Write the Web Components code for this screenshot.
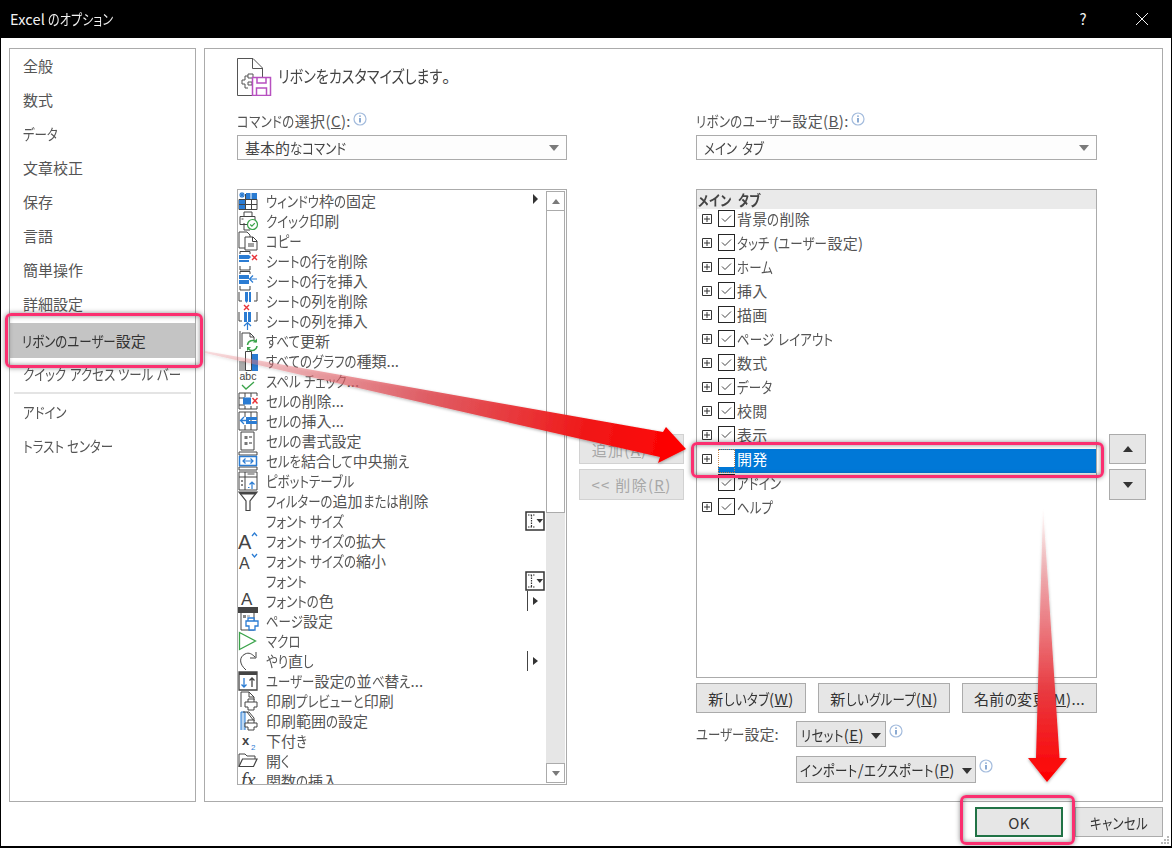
<!DOCTYPE html>
<html lang="ja">
<head>
<meta charset="utf-8">
<title>Excel のオプション</title>
<style>
    html, body { margin: 0; padding: 0; background: #fff; }
    body {
        font-family: "Noto Sans CJK JP", "Noto Sans", sans-serif;
        font-size: 15px;
        font-feature-settings: "palt";
        color: #444;
        overflow: hidden;
    }
</style>
</head>
<body>
<xl-window>
    <nav-panel slot="nav">
        <nav-item>全般</nav-item>
        <nav-item>数式</nav-item>
        <nav-item>データ</nav-item>
        <nav-item>文章校正</nav-item>
        <nav-item>保存</nav-item>
        <nav-item>言語</nav-item>
        <nav-item>簡単操作</nav-item>
        <nav-item>詳細設定</nav-item>
        <nav-item selected>リボンのユーザー設定</nav-item>
        <nav-item>クイック アクセス ツール バー</nav-item>
        <nav-sep></nav-sep>
        <nav-item>アドイン</nav-item>
        <nav-item>トラスト センター</nav-item>
    </nav-panel>

    <main-panel slot="main">
        <field-label slot="left-label" info>コマンドの選択(<u>C</u>):</field-label>
        <drop-select slot="left-select">基本的なコマンド</drop-select>
        <command-list slot="left-list">
            <cmd-row icon="freeze" tail="more">ウィンドウ枠の固定</cmd-row>
            <cmd-row icon="qprint">クイック印刷</cmd-row>
            <cmd-row icon="copy">コピー</cmd-row>
            <cmd-row icon="delrow">シートの行を削除</cmd-row>
            <cmd-row icon="insrow">シートの行を挿入</cmd-row>
            <cmd-row icon="delcol">シートの列を削除</cmd-row>
            <cmd-row icon="inscol">シートの列を挿入</cmd-row>
            <cmd-row icon="refresh">すべて更新</cmd-row>
            <cmd-row icon="chart">すべてのグラフの種類...</cmd-row>
            <cmd-row icon="spell">スペル チェック...</cmd-row>
            <cmd-row icon="delcell">セルの削除...</cmd-row>
            <cmd-row icon="inscell">セルの挿入...</cmd-row>
            <cmd-row icon="format">セルの書式設定</cmd-row>
            <cmd-row icon="merge">セルを結合して中央揃え</cmd-row>
            <cmd-row icon="pivot">ピボットテーブル</cmd-row>
            <cmd-row icon="filter">フィルターの追加または削除</cmd-row>
            <cmd-row tail="combo">フォント サイズ</cmd-row>
            <cmd-row icon="grow">フォント サイズの拡大</cmd-row>
            <cmd-row icon="shrink">フォント サイズの縮小</cmd-row>
            <cmd-row tail="combo">フォント</cmd-row>
            <cmd-row icon="fontcolor" tail="split">フォントの色</cmd-row>
            <cmd-row icon="pagesetup">ページ設定</cmd-row>
            <cmd-row icon="macro">マクロ</cmd-row>
            <cmd-row icon="redo" tail="split">やり直し</cmd-row>
            <cmd-row icon="sort">ユーザー設定の並べ替え...</cmd-row>
            <cmd-row icon="preview">印刷プレビューと印刷</cmd-row>
            <cmd-row icon="printarea">印刷範囲の設定</cmd-row>
            <cmd-row icon="subscript">下付き</cmd-row>
            <cmd-row icon="open">開く</cmd-row>
            <cmd-row icon="fx">関数の挿入</cmd-row>
        </command-list>

        <flat-button slot="middle" disabled style="height:30px">追加(<u>A</u>) &gt;&gt;</flat-button>
        <flat-button slot="middle" disabled style="height:31px">&lt;&lt; 削除(<u>R</u>)</flat-button>

        <field-label slot="right-label" info>リボンのユーザー設定(<u>B</u>):</field-label>
        <drop-select slot="right-select">メイン タブ</drop-select>
        <tab-tree slot="right-list" title-text="メイン タブ">
            <tree-row>背景の削除</tree-row>
            <tree-row>タッチ (ユーザー設定)</tree-row>
            <tree-row>ホーム</tree-row>
            <tree-row>挿入</tree-row>
            <tree-row>描画</tree-row>
            <tree-row>ページ レイアウト</tree-row>
            <tree-row>数式</tree-row>
            <tree-row>データ</tree-row>
            <tree-row>校閲</tree-row>
            <tree-row>表示</tree-row>
            <tree-row selected unchecked>開発</tree-row>
            <tree-row noexpand>アドイン</tree-row>
            <tree-row>ヘルプ</tree-row>
        </tab-tree>
        <flat-button slot="right-actions" style="width:110px;height:30px">新しいタブ(<u>W</u>)</flat-button>
        <flat-button slot="right-actions" style="width:132px;height:30px">新しいグループ(<u>N</u>)</flat-button>
        <flat-button slot="right-actions" style="width:135px;height:30px">名前の変更(<u>M</u>)...</flat-button>

        <reset-row slot="right-reset"></reset-row>

        <flat-button slot="side" style="height:30px"><arrow-glyph></arrow-glyph></flat-button>
        <flat-button slot="side" style="height:31px"><arrow-glyph down></arrow-glyph></flat-button>
    </main-panel>

    <flat-button slot="footer" primary style="width:88px;height:30px">OK</flat-button>
    <flat-button slot="footer" style="width:88px;height:30px">キャンセル</flat-button>
</xl-window>
<annotation-layer></annotation-layer>

<script>
    // small 20x20 pictures for the command list
    const G = '#444';
    const B = '#2b7cd3';
    const R = '#e8343a';
    const N = '#3aa34a';
    const line = `fill="none" stroke="${G}" stroke-width="1"`;
    const commandIcons = {
        freeze: `<path d="M1 8.500h18v10H1z" ${line}/><path d="M7.500 3v15.500M13.500 3v15.500M1 13.500h18" ${line}/><path d="M8 2h11v6H8z" fill="${B}"/><path d="M1 9h6v4H1zM1 14h6v4H1z" fill="${B}"/><path d="M13 2v6" stroke="#fff"/><path d="M4 1v6M1 4h6M2 2l4 4M6 2l-4 4" stroke="${B}" stroke-width="1.100"/>`,
        qprint: `<path d="M6 5V1h8v4M2 5.500h15v8H2zM6 12v7h6" ${line}/><path d="M3.500 8h2" stroke="${G}"/><circle cx="14.500" cy="13.500" r="5" fill="#fff" stroke="${N}" stroke-width="1.200"/><path d="M12.200 13.500l1.700 1.700 2.900-3" fill="none" stroke="${N}" stroke-width="1.200"/>`,
        copy: `<path d="M7 17H1V1h8l3 3v3" ${line}/><path d="M7 6h8l4 4v9H7z" fill="#fff" stroke="${G}"/><path d="M14.500 6v4.500H19M10 13h6M10 15h6" ${line}/>`,
        delrow: `<path d="M2 3V0.500h10V3M2 15v4h10v-4" ${line}/><path d="M1 4h10l2 2-2 2H1zM1 9h10v2H1z" fill="${B}"/><path d="M14 4l5 5M19 4l-5 5" stroke="${R}" stroke-width="1.400"/>`,
        insrow: `<path d="M2 3V0.500h10V3M2 15v4h10v-4" ${line}/><path d="M1 4h10v4H1zM1 9h10v4H1z" fill="${B}"/><path d="M19 8h-7M15 4.500L11.500 8l3.500 3.500" fill="none" stroke="${B}" stroke-width="1.200"/>`,
        delcol: `<path d="M1 1v9h3M19 1v9h-3" ${line}/><path d="M7 1h3v9l-1.500 2L7 10zM11 1h2v10h-2z" fill="${B}"/><path d="M6 14l5 5M11 14l-5 5" stroke="${R}" stroke-width="1.400"/>`,
        inscol: `<path d="M1 1v9h3M19 1v9h-3" ${line}/><path d="M6 1h3v10H6zM10 1h3v10h-3z" fill="${B}"/><path d="M9.500 19v-7M6 15l3.500-3.500L13 15" fill="none" stroke="${B}" stroke-width="1.200"/>`,
        refresh: `<path d="M4 16V2h8l4 4v3" ${line}/><path d="M2 18V0" ${line}/><path d="M12 2v4h4" ${line}/><path d="M9.500 14a5 5 0 0 1 8.500-3M19 15a5 5 0 0 1-8.500 3" fill="none" stroke="${N}" stroke-width="1.500"/><path d="M19 7.500v4h-4zM9 20v-4h4z" fill="${N}"/>`,
        chart: `<path d="M1 10h6v10H1z" fill="#aaa"/><path d="M7.500 0.500h6v19h-6z" fill="#fff" stroke="${G}"/><path d="M14 3h6v17h-6z" fill="${B}"/>`,
        spell: `<text x="10" y="9" text-anchor="middle" font-family="Liberation Sans, sans-serif" font-size="10.500" fill="${G}">abc</text><path d="M4 14l4 4 8-7" fill="none" stroke="${N}" stroke-width="1.300"/>`,
        delcell: `<path d="M1 2h18v3M1 2v16h18v-3M1 7h6M1 14h6M7 2v4M7 15v3M13 2v4M13 15v3" ${line}/><path d="M5 6.500h8v7H5z" fill="${B}"/><path d="M14.500 7l5 5.500M19.500 7l-5 5.500" stroke="${R}" stroke-width="1.400"/>`,
        inscell: `<path d="M1 1h18v18H1zM13 1v18M7 1v5M7 14v5" ${line}/><path d="M8 6h11v3H8zM8 10h11v3H8z" fill="${B}"/><path d="M11 9.500H2.500M6 6L2.500 9.500 6 13" fill="none" stroke="${B}" stroke-width="1.300"/>`,
        format: `<path d="M3 1h13v18H3z" fill="#fff" stroke="${G}"/><path d="M6.500 5h3v3h-3zM6.500 11h3v3h-3z" fill="#777"/><path d="M11 6h3M11 12h3" stroke="#777" stroke-width="1.500"/>`,
        merge: `<path d="M1 4h18v-3H1zM1 16h18v3H1z" ${line}/><path d="M1.500 5.500h17v9h-17z" fill="#fff" stroke="${B}" stroke-width="1.500"/><path d="M5 10h10M7.500 7.500L5 10l2.500 2.500M12.500 7.500L15 10l-2.500 2.500" fill="none" stroke="${B}" stroke-width="1.200"/>`,
        pivot: `<path d="M1 1h18v18H1zM1 6h18M7 1v18" ${line}/><path d="M9.500 3h7" stroke="#888" stroke-width="1.500"/><path d="M3 9h2v2H3zM3 13h2v2H3z" fill="#888"/><path d="M14 18v-7M11.500 13.500L14 11l2.500 2.500" fill="none" stroke="${B}" stroke-width="1.200"/><path d="M10 16.500h1.500" stroke="${B}"/>`,
        filter: `<path d="M1 1h18l-7 9v9.500H8V10z" fill="#fff" stroke="${G}" stroke-width="1.200"/><path d="M1 1h18l-1.500 2.500H2.500z" fill="${G}"/>`,
        grow: `<text x="0" y="18" font-family="Liberation Sans, sans-serif" font-size="20" fill="${G}">A</text><path d="M14 5l2.500-3L19 5" fill="none" stroke="${B}" stroke-width="1.300"/>`,
        shrink: `<text x="1" y="18" font-family="Liberation Sans, sans-serif" font-size="16" fill="${G}">A</text><path d="M14 3l2.500 3L19 3" fill="none" stroke="${B}" stroke-width="1.300"/>`,
        fontcolor: `<text x="3" y="14" font-family="Liberation Sans, sans-serif" font-size="17" fill="${G}">A</text><path d="M0 16h20v4H0z" fill="${G}"/>`,
        pagesetup: `<path d="M3 1h13v18H3z" fill="#fff" stroke="${G}"/><path d="M0 0h20v2H0z" fill="${G}"/><path d="M5 4h3v3H5z" fill="#888"/><path d="M9 5h3" stroke="#888"/><path d="M10 10V7h6v3M8 10h12v5h-3v4H11v-4H8z" fill="#fff" stroke="${B}" stroke-width="1.300"/>`,
        macro: `<path d="M1.500 1.500L17.500 10 1.500 18.500z" fill="#fff" stroke="${N}" stroke-width="1.300"/>`,
        redo: `<path d="M8 19C1 13 1 6 7 3c4-2 7 0 10 3" ${line} stroke-width="1.300"/><path d="M18 1v6h-6" ${line} stroke-width="1.300"/>`,
        sort: `<path d="M1 1h18v18H1z" fill="#fff" stroke="${G}" stroke-width="1.300"/><path d="M1 1h18v3H1z" fill="${G}"/><path d="M6 7v9M3.500 13.500L6 16l2.500-2.500" fill="none" stroke="${B}" stroke-width="1.300"/><path d="M14 16V7M11.500 9.500L14 7l2.500 2.500" fill="none" stroke="${G}" stroke-width="1.300"/>`,
        preview: `<path d="M3 16V1h8l5 5v3M11 1v5h5" ${line}/><path d="M10 11V8h6v3M7 11h12v5h-3v3h-6v-3H7z" fill="#fff" stroke="${G}"/>`,
        printarea: `<path d="M3 19V1h4v18" fill="#bcd7f2" stroke="${B}"/><path d="M5 1h6l5 6v3M9 1l7 9" ${line}/><path d="M10 12V9h6v3M7 12h12v4h-3v3h-6v-3H7z" fill="#fff" stroke="${G}"/>`,
        subscript: `<text x="4" y="14" font-family="Liberation Sans, sans-serif" font-weight="700" font-size="13" fill="${G}">x</text><text x="13" y="19" font-family="Liberation Sans, sans-serif" font-size="8" fill="${B}">2</text>`,
        open: `<path d="M1 15V3h6l2 2h8v3" ${line} stroke-width="1.200"/><path d="M1 15.500L4.500 8H19l-3.500 7.500z" fill="#fff" stroke="${G}" stroke-width="1.200"/>`,
        fx: `<text x="3" y="16" font-family="Liberation Serif, serif" font-style="italic" font-size="20" fill="${G}">fx</text>`,
    };

    class XlWindow extends HTMLElement {
        constructor() {
            super();
            this.renderRoot = this.attachShadow({ mode: 'open' });
            this.renderRoot.innerHTML = `
                <style>
                    :host {
                        display: flex;
                        flex-direction: column;
                        box-sizing: border-box;
                        width: 1172px;
                        height: 848px;
                        border: solid #000;
                        border-width: 0 1px 2px 1px;
                        background: #fff;
                    }
                    header {
                        display: flex;
                        align-items: center;
                        flex: 0 0 38px;
                        margin: 0 -1px;
                        padding-left: 10px;
                        background: #000;
                        color: #f2f2f2;
                        font-size: 14.500px;
                    }
                    .title { flex: 1; margin-bottom: 2px; letter-spacing: .15px; }
                    .help { width: 20px; text-align: center; margin-right: 43px; font-size: 15px; margin-bottom: 2px; }
                    .close { display: block; margin-right: 24px; }
                    .body {
                        display: flex;
                        gap: 8px;
                        padding: 10px 8px 0;
                        box-sizing: border-box;
                        flex: 0 0 764px;
                    }
                    footer {
                        position: relative;
                        display: flex;
                        justify-content: flex-end;
                        gap: 12px;
                        padding: 5px 8px 0 0;
                        flex: 1;
                    }
                    .grip { position: absolute; right: 1px; bottom: 1px; }
                </style>
                <header>
                    <span class="title">Excel のオプション</span>
                    <span class="help">?</span>
                    <svg class="close" width="12" height="12" viewBox="0 0 12 12"><path d="M0 0l12 12M12 0L0 12" stroke="#f2f2f2" fill="none"/></svg>
                </header>
                <div class="body">
                    <slot name="nav"></slot>
                    <slot name="main"></slot>
                </div>
                <footer>
                    <slot name="footer"></slot>
                    <svg class="grip" width="10" height="10" viewBox="0 0 10 10"><path d="M7 1h2v2H7zM4 4h2v2H4zM7 4h2v2H7zM1 7h2v2H1zM4 7h2v2H4zM7 7h2v2H7z" fill="#b8b8b8"/></svg>
                </footer>
            `;
        }
    }
    customElements.define('xl-window', XlWindow);

    class NavPanel extends HTMLElement {
        constructor() {
            super();
            this.attachShadow({ mode: 'open' }).innerHTML = `
                <style>
                    :host {
                        display: block;
                        flex: 0 0 187px;
                        box-sizing: border-box;
                        border: 1px solid #ababab;
                        padding-top: 1px;
                    }
                </style>
                <slot></slot>
            `;
        }
    }
    customElements.define('nav-panel', NavPanel);

    class NavItem extends HTMLElement {
        constructor() {
            super();
            this.attachShadow({ mode: 'open' }).innerHTML = `
                <style>
                    :host {
                        display: flex;
                        align-items: center;
                        box-sizing: border-box;
                        height: 34px;
                        padding: 0 0 4px 13px;
                        color: #555;
                        white-space: nowrap;
                    }
                    :host([selected]) {
                        height: 35px;
                        margin-top: 1px;
                        padding: 0 0 0 12px;
                        background: #c4c4c4;
                        color: #333;
                    }
                </style>
                <span><slot></slot></span>
            `;
        }
    }
    customElements.define('nav-item', NavItem);

    class NavSep extends HTMLElement {
        constructor() {
            super();
            this.attachShadow({ mode: 'open' }).innerHTML = `
                <style>
                    :host {
                        display: block;
                        height: 2px;
                        margin: 0 4px 2px;
                        background: #e4e4e4;
                    }
                </style>
            `;
        }
    }
    customElements.define('nav-sep', NavSep);

    class MainPanel extends HTMLElement {
        constructor() {
            super();
            this.attachShadow({ mode: 'open' }).innerHTML = `
                <style>
                    :host {
                        display: block;
                        flex: 1;
                        box-sizing: border-box;
                        height: 754px;
                        border: 1px solid #ababab;
                        padding: 9px 0 0 32px;
                    }
                    .heading {
                        display: flex;
                        align-items: center;
                        gap: 6px;
                        height: 38px;
                        font-size: 17px;
                        color: #444;
                        margin-bottom: 16px;
                    }
                    .heading svg { display: block; }
                    .heading span { margin-top: -4px; }
                    .columns { display: flex; gap: 12px; }
                    .col { display: flex; flex-direction: column; }
                    .left { width: 330px; }
                    .mid { width: 105px; padding-top: 322px; gap: 5px; }
                    .right { width: 401px; }
                    .side { width: 37px; padding-top: 322px; gap: 5px; }
                    .actions { display: flex; justify-content: space-between; margin-top: 5px; }
                    ::slotted([slot$="-select"]) { margin-top: 5px; margin-bottom: 29px; }
                </style>
                <div class="heading">
                    <svg width="35" height="38" viewBox="0 0 35 38">
                        <path d="M0.500 37.500V0.500H16L25.500 10v12" fill="none" stroke="#555"/>
                        <path d="M0.500 37.500H15" fill="none" stroke="#555"/>
                        <path d="M15.500 1v9.500H25" fill="none" stroke="#555"/>
                        <path d="M11 18h-3v4H5v4h3v4h3M11 16h5v4h-5zM11 24h4v3h-4z" fill="none" stroke="#555"/>
                        <path d="M15.500 19.500h18v18h-18z" fill="#fff" stroke="#b750c0" stroke-width="1.500"/>
                        <path d="M20 20v5h9v-5M19.500 37v-7h10v7" fill="none" stroke="#b750c0" stroke-width="1.500"/>
                    </svg>
                    <span>リボンをカスタマイズします。</span>
                </div>
                <div class="columns">
                    <div class="col left">
                        <slot name="left-label"></slot>
                        <slot name="left-select"></slot>
                        <slot name="left-list"></slot>
                    </div>
                    <div class="col mid"><slot name="middle"></slot></div>
                    <div class="col right">
                        <slot name="right-label"></slot>
                        <slot name="right-select"></slot>
                        <slot name="right-list"></slot>
                        <div class="actions"><slot name="right-actions"></slot></div>
                        <slot name="right-reset"></slot>
                    </div>
                    <div class="col side"><slot name="side"></slot></div>
                </div>
            `;
        }
    }
    customElements.define('main-panel', MainPanel);

    const infoSvg = `
        <svg width="14" height="14" viewBox="0 0 14 14" style="display:block">
            <circle cx="7" cy="7" r="6" fill="#fff" stroke="#a4bcdd" stroke-width="1.200"/>
            <path d="M7 6v4.500" stroke="#3f72b5" stroke-width="1.200"/>
            <path d="M7 3.500v1.300" stroke="#3f72b5" stroke-width="1.200"/>
        </svg>
    `;

    class FieldLabel extends HTMLElement {
        constructor() {
            super();
            this.attachShadow({ mode: 'open' }).innerHTML = `
                <style>
                    :host {
                        display: flex;
                        align-items: flex-start;
                        height: 18px;
                        line-height: 18px;
                        color: #555;
                        white-space: nowrap;
                        letter-spacing: .4px;
                    }
                    .info { margin-left: 2px; }
                </style>
                <span><slot></slot></span>
                <span class="info">${infoSvg}</span>
            `;
        }
    }
    customElements.define('field-label', FieldLabel);

    class DropSelect extends HTMLElement {
        constructor() {
            super();
            this.attachShadow({ mode: 'open' }).innerHTML = `
                <style>
                    :host {
                        display: flex;
                        align-items: center;
                        justify-content: space-between;
                        box-sizing: border-box;
                        height: 25px;
                        padding: 0 7px;
                        border: 1px solid #ababab;
                        background: #fdfdfd;
                        color: #444;
                        word-spacing: 2px;
                    }
                    i {
                        border: solid transparent;
                        border-width: 6px 5px 0;
                        border-top-color: #7a7a7a;
                    }
                </style>
                <span><slot></slot></span>
                <i></i>
            `;
        }
    }
    customElements.define('drop-select', DropSelect);

    class CommandList extends HTMLElement {
        constructor() {
            super();
            this.attachShadow({ mode: 'open' }).innerHTML = `
                <style>
                    :host {
                        display: flex;
                        box-sizing: border-box;
                        height: 596px;
                        border: 1px solid #ababab;
                    }
                    .rows {
                        flex: 1;
                        min-width: 0;
                        height: 594px;
                        padding-top: 1px;
                        box-sizing: border-box;
                        overflow: hidden;
                    }
                    .bar {
                        display: flex;
                        flex-direction: column;
                        flex: 0 0 19px;
                        margin: 1px 1px 1px 0;
                        background: #e6e6e6;
                    }
                    .btn {
                        display: flex;
                        align-items: center;
                        justify-content: center;
                        box-sizing: border-box;
                        height: 20px;
                        background: #fff;
                        border: 1px solid #ababab;
                    }
                    .thumb {
                        box-sizing: border-box;
                        height: 303px;
                        margin-top: -1px;
                        background: #fff;
                        border: 1px solid #ababab;
                    }
                    .spacer { flex: 1; }
                    .up { border-bottom: 5px solid #7a7a7a; border-left: 4.500px solid transparent; border-right: 4.500px solid transparent; }
                    .down { border-top: 5px solid #7a7a7a; border-left: 4.500px solid transparent; border-right: 4.500px solid transparent; }
                </style>
                <div class="rows"><slot></slot></div>
                <div class="bar">
                    <div class="btn"><i class="up"></i></div>
                    <div class="thumb"></div>
                    <div class="spacer"></div>
                    <div class="btn"><i class="down"></i></div>
                </div>
            `;
        }
    }
    customElements.define('command-list', CommandList);

    const tails = {
        more: `<svg width="8" height="12" viewBox="0 0 8 12" style="margin:-4px 6px 0 0"><path d="M1 1l5 5-5 5z" fill="#333"/></svg>`,
        combo: `<svg width="20" height="20" viewBox="0 0 20 20" style="margin-right:1px">
                    <path d="M1 1h18v18H1z" fill="#fff" stroke="#333" stroke-width="1.500"/>
                    <path d="M3 4h7M3 16h7M6.500 4v12" fill="none" stroke="#333" stroke-dasharray="1.500 1" stroke-width="1.200"/>
                    <path d="M11.500 8h6.500l-3.200 4z" fill="#333"/>
                </svg>`,
        split: `<svg width="17" height="20" viewBox="0 0 17 20" style="margin-right:2px">
                    <path d="M0.500 0v20" stroke="#444"/>
                    <path d="M6 6l5 4-5 4z" fill="#333"/>
                </svg>`,
    };

    class CmdRow extends HTMLElement {
        constructor() {
            super();
            this.attachShadow({ mode: 'open' });
        }

        connectedCallback() {
            const picture = commandIcons[this.getAttribute('icon')] || '';
            const tail = tails[this.getAttribute('tail')] || '';

            this.shadowRoot.innerHTML = `
                <style>
                    :host {
                        display: flex;
                        align-items: center;
                        height: 20px;
                        color: #555;
                        white-space: nowrap;
                    }
                    .pic { flex: 0 0 20px; margin-right: 8px; display: block; overflow: visible; }
                    .text { flex: 1; margin-bottom: 2px; }
                </style>
                <svg class="pic" width="20" height="20" viewBox="0 0 20 20">${picture}</svg>
                <span class="text"><slot></slot></span>
                ${tail}
            `;
        }
    }
    customElements.define('cmd-row', CmdRow);

    class TabTree extends HTMLElement {
        constructor() {
            super();
            this.attachShadow({ mode: 'open' });
        }

        connectedCallback() {
            this.shadowRoot.innerHTML = `
                <style>
                    :host {
                        display: block;
                        box-sizing: border-box;
                        height: 489px;
                        border: 1px solid #ababab;
                    }
                    .head {
                        height: 19px;
                        line-height: 19px;
                        padding-left: 1px;
                        background: #eaeaea;
                        color: #444;
                        font-weight: 700;
                        font-size: 14.500px;
                        word-spacing: 3px;
                        letter-spacing: .4px;
                    }
                </style>
                <div class="head">${this.getAttribute('title-text')}</div>
                <slot></slot>
            `;
        }
    }
    customElements.define('tab-tree', TabTree);

    class TreeRow extends HTMLElement {
        constructor() {
            super();
            this.attachShadow({ mode: 'open' });
        }

        connectedCallback() {
            const checked = !this.hasAttribute('unchecked');
            const expander = this.hasAttribute('noexpand') ? '' : `
                <svg class="plus" width="10" height="10" viewBox="0 0 10 10">
                    <path d="M0.500 0.500h9v9h-9z" fill="#fff" stroke="#333"/>
                    <path d="M2 5h6M5 2v6" stroke="#333"/>
                </svg>`;

            this.shadowRoot.innerHTML = `
                <style>
                    :host {
                        display: flex;
                        height: 24px;
                        padding-left: 5px;
                        color: #555;
                        white-space: nowrap;
                    }
                    .expander { flex: 0 0 16px; padding-top: 5px; }
                    .plus { display: block; }
                    .line {
                        flex: 1;
                        display: flex;
                        padding-top: 1px;
                    }
                    .box {
                        position: relative;
                        flex: 0 0 17px;
                        box-sizing: border-box;
                        height: 17px;
                        margin: 0 2px 0 0;
                        border: 1px solid #262626;
                        background: #fff;
                    }
                    .box svg { display: block; }
                    .text { line-height: 18px; letter-spacing: .2px; }
                    :host([selected]) .line {
                        background: #0078d7;
                        color: #fff;
                    }
                    :host([selected]) .text { color: #fff; }
                    :host([selected]) .box { border-color: #fff; }
                    :host([selected]) .focus {
                        position: absolute;
                        inset: -2px -1px -7px -1px;
                        border: 1px dotted #c98a50;
                    }
                </style>
                <div class="expander">${expander}</div>
                <div class="line">
                    <span class="box">
                        ${checked ? '<svg width="15" height="15" viewBox="0 0 15 15"><path d="M3 7.500l3 3 6-6" fill="none" stroke="#444"/></svg>' : ''}
                        <span class="focus"></span>
                    </span>
                    <span class="text"><slot></slot></span>
                </div>
            `;
        }
    }
    customElements.define('tree-row', TreeRow);

    class FlatButton extends HTMLElement {
        constructor() {
            super();
            this.attachShadow({ mode: 'open' }).innerHTML = `
                <style>
                    :host {
                        display: inline-flex;
                        align-items: center;
                        justify-content: center;
                        box-sizing: border-box;
                        border: 1px solid #ababab;
                        background: #e6e6e6;
                        color: #333;
                        white-space: nowrap;
                        letter-spacing: .4px;
                    }
                    :host([primary]) { border: 2px solid #217346; }
                    :host([disabled]) {
                        border-color: #d2d2d2;
                        color: #a8a8a8;
                        letter-spacing: 1.300px;
                    }
                </style>
                <span><slot></slot></span>
            `;
        }
    }
    customElements.define('flat-button', FlatButton);

    class ArrowGlyph extends HTMLElement {
        constructor() {
            super();
            this.attachShadow({ mode: 'open' }).innerHTML = `
                <style>
                    :host {
                        display: block;
                        width: 0;
                        height: 0;
                        border-left: 5px solid transparent;
                        border-right: 5px solid transparent;
                        border-bottom: 6px solid #333;
                    }
                    :host([down]) {
                        border-bottom: 0;
                        border-top: 6px solid #333;
                    }
                </style>
            `;
        }
    }
    customElements.define('arrow-glyph', ArrowGlyph);

    class ResetRow extends HTMLElement {
        constructor() {
            super();
            const caret = '<svg width="10" height="6" viewBox="0 0 10 6" style="margin-left:7px;vertical-align:2px"><path d="M0 0h10L5 6z" fill="#333"/></svg>';
            this.attachShadow({ mode: 'open' }).innerHTML = `
                <style>
                    :host {
                        display: grid;
                        grid-template-columns: 100px auto;
                        grid-row-gap: 9px;
                        justify-content: start;
                        margin-top: 8px;
                    }
                    .row { display: flex; align-items: flex-start; }
                    .label { height: 26px; line-height: 26px; color: #555; }
                    .info { margin: 3px 0 0 3px; }
                </style>
                <div class="label">ユーザー設定:</div>
                <div class="row">
                    <flat-button style="width:90px;height:26px">リセット(<u>E</u>)${caret}</flat-button>
                    <span class="info">${infoSvg}</span>
                </div>
                <div></div>
                <div class="row">
                    <flat-button style="width:180px;height:27px">インポート/エクスポート(<u>P</u>)${caret}</flat-button>
                    <span class="info">${infoSvg}</span>
                </div>
            `;
        }
    }
    customElements.define('reset-row', ResetRow);

    // the red arrows and pink frames drawn over the screenshot
    class AnnotationLayer extends HTMLElement {
        constructor() {
            super();
            this.attachShadow({ mode: 'open' }).innerHTML = `
                <style>
                    :host {
                        position: absolute;
                        left: 0;
                        top: 0;
                        width: 1172px;
                        height: 848px;
                        pointer-events: none;
                    }
                    svg { position: absolute; left: 0; top: 0; }
                    .frame {
                        position: absolute;
                        box-sizing: border-box;
                        border: 3px solid #fb2f70;
                        border-radius: 6px;
                        box-shadow: 0 0 5px rgba(0, 0, 0, .45), inset 0 0 5px rgba(0, 0, 0, .45);
                    }
                </style>
                <div class="frame" style="left:5px;top:313px;width:198px;height:55px"></div>
                <div class="frame" style="left:691px;top:442px;width:413px;height:36px"></div>
                <div class="frame" style="left:960px;top:795px;width:115px;height:50px"></div>
                <svg width="1172" height="848" viewBox="0 0 1172 848">
                    <defs>
                        <linearGradient id="across" gradientUnits="userSpaceOnUse" x1="205" y1="352" x2="680" y2="450">
                            <stop offset="0" stop-color="#f08a90" stop-opacity=".25"/>
                            <stop offset=".45" stop-color="#e05058" stop-opacity=".85"/>
                            <stop offset=".8" stop-color="#f01818"/>
                            <stop offset="1" stop-color="#ff0000"/>
                        </linearGradient>
                        <linearGradient id="downward" gradientUnits="userSpaceOnUse" x1="1045" y1="506" x2="1045" y2="782">
                            <stop offset="0" stop-color="#f4a0a0" stop-opacity="0"/>
                            <stop offset=".33" stop-color="#f08a90" stop-opacity=".85"/>
                            <stop offset=".67" stop-color="#e83a40"/>
                            <stop offset="1" stop-color="#ff0000"/>
                        </linearGradient>
                        <filter id="soft" x="-5%" y="-5%" width="110%" height="110%">
                            <feDropShadow dx="0" dy="1" stdDeviation="1.500" flood-opacity=".35"/>
                        </filter>
                    </defs>
                    <path filter="url(#soft)" fill="url(#across)" d="M205 351L663 432 666 427 686 449 658 463 660 457 205 353z"/>
                    <path filter="url(#soft)" fill="url(#downward)" d="M1043 506L1059.500 758H1067L1047 782 1028 758H1036z"/>
                </svg>
            `;
        }
    }
    customElements.define('annotation-layer', AnnotationLayer);

    // Meiryo UI has narrow kana, so squeeze the kana runs of every text on the page
    const KANA_SCALE = 0.83;

    function collectKanaNodes(root, found) {
        for (const node of root.childNodes) {
            if (node.nodeType === Node.TEXT_NODE) {
                if (/[\u3040-\u30ff]/.test(node.nodeValue)) {
                    found.push(node);
                }
            } else if (node.nodeType === Node.ELEMENT_NODE && !['STYLE', 'SCRIPT', 'svg'].includes(node.nodeName)) {
                if (node.shadowRoot) {
                    collectKanaNodes(node.shadowRoot, found);
                }
                collectKanaNodes(node, found);
            }
        }
        return found;
    }

    function narrowKana() {
        const runs = [];

        for (const node of collectKanaNodes(document.body, [])) {
            const fragment = document.createDocumentFragment();

            for (const part of node.nodeValue.split(/([\u3040-\u30ff]+)/)) {
                if (/^[\u3040-\u30ff]+$/.test(part)) {
                    const run = document.createElement('span');
                    run.textContent = part;
                    run.style.cssText = `display:inline-block;transform:scaleX(${KANA_SCALE});transform-origin:0 50%`;
                    fragment.appendChild(run);
                    runs.push(run);
                } else if (part) {
                    fragment.appendChild(document.createTextNode(part));
                }
            }
            node.replaceWith(fragment);
        }

        const widths = runs.map((run) => run.offsetWidth);
        runs.forEach((run, index) => {
            run.style.marginRight = `${-widths[index] * (1 - KANA_SCALE)}px`;
        });
    }

    narrowKana();
</script>
</body>
</html>
